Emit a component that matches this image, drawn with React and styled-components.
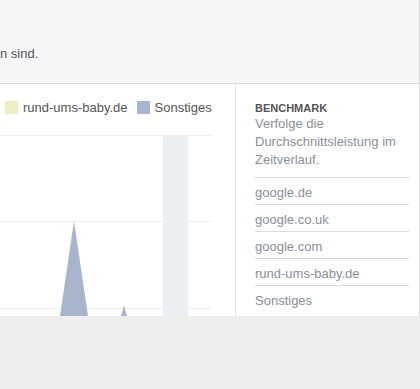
import React from 'react';
import styled, { createGlobalStyle } from 'styled-components';

const Global = createGlobalStyle`
  html, body {
    margin: 0;
    padding: 0;
    background: #eeeeee;
    font-family: 'Liberation Sans', Arial, sans-serif;
  }
`;

const Page = styled.div`
  width: 419px;
  border-right: 1px solid #dcdcdc;
  display: flex;
  flex-direction: column;
`;

const Intro = styled.div`
  background: #f5f6f8;
  border-bottom: 1px solid #dddddd;
  box-sizing: border-box;
  height: 84px;
  padding-top: 45px;
  font-size: 13px;
  line-height: 17px;
  color: #555;
`;

const Panel = styled.div`
  display: flex;
  height: 232px;
  background: #fff;
`;

const ChartCol = styled.div`
  width: 235px;
  border-right: 1px solid #e2e2e2;
  display: flex;
  flex-direction: column;
`;

const Legend = styled.div`
  display: flex;
  align-items: center;
  gap: 9px;
  padding: 17px 0 0 5px;
  height: 13px;
`;

const LegendItem = styled.div`
  display: flex;
  align-items: center;
  gap: 5px;
  font-size: 13px;
  color: #555;
  white-space: nowrap;
`;

const Swatch = styled.span`
  width: 13px;
  height: 13px;
  background: ${(p) => p.color};
`;

const Plot = styled.svg`
  display: block;
  margin-top: 16px;
`;

const Side = styled.div`
  flex: 1;
  padding: 17px 10px 0 19px;
`;

const Title = styled.div`
  font-size: 11px;
  font-weight: bold;
  color: #555;
  line-height: 14px;
`;

const Desc = styled.div`
  font-size: 13px;
  line-height: 18px;
  color: #898f99;
  margin-bottom: 8px;
`;

const Item = styled.div`
  border-top: 1px solid #d8dadd;
  padding-top: 3px;
  height: 23px;
  line-height: 23px;
  font-size: 13px;
  color: #898f99;
`;

const sites = ['google.de', 'google.co.uk', 'google.com', 'rund-ums-baby.de', 'Sonstiges'];

export default function App() {
  return (
    <>
      <Global />
      <Page>
        <Intro>n sind.</Intro>
        <Panel>
          <ChartCol>
            <Legend>
              <LegendItem>
                <Swatch color='#efedc4' />
                rund-ums-baby.de
              </LegendItem>
              <LegendItem>
                <Swatch color='#a9b5cd' />
                Sonstiges
              </LegendItem>
            </Legend>
            <Plot width='235' height='186' viewBox='0 0 235 186'>
              <rect x='163' y='5' width='25' height='181' fill='#eaeff6' />
              {[5, 91, 178].map((y) => (
                <line key={y} x1='0' x2='213' y1={y + 0.5} y2={y + 0.5} stroke='#eef0f3' />
              ))}
              <polygon points='60,186 74,91 88,186' fill='#a9b5cd' />
              <polygon points='121,186 124,175 127,186' fill='#a9b5cd' />
            </Plot>
          </ChartCol>
          <Side>
            <Title>BENCHMARK</Title>
            <Desc>Verfolge die Durchschnittsleistung im Zeitverlauf.</Desc>
            {sites.map((s) => (
              <Item key={s}>{s}</Item>
            ))}
          </Side>
        </Panel>
      </Page>
    </>
  );
}
